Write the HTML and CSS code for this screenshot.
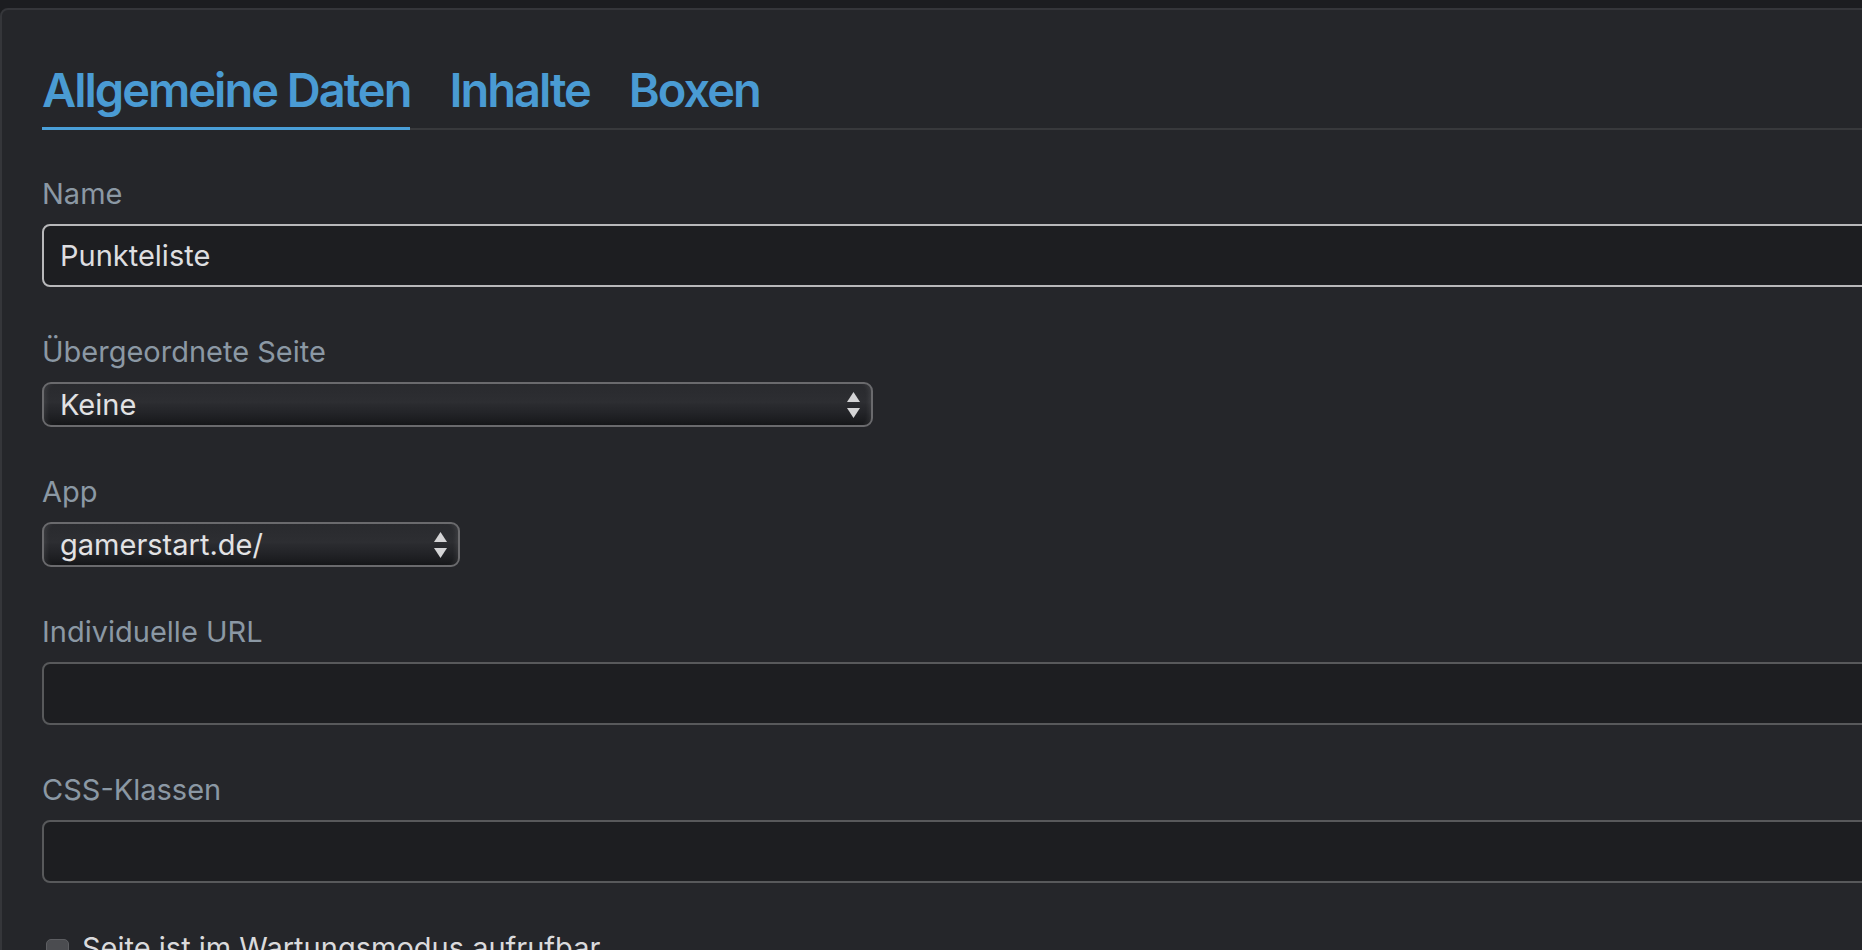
FILE: index.html
```html
<!DOCTYPE html>
<html lang="de">
<head>
<meta charset="utf-8">
<title>Seite bearbeiten</title>
<link rel="stylesheet" href="styles.css">
</head>
<body>
<div class="card">
  <nav class="tabs">
    <a class="tab tab-active">Allgemeine Daten</a>
    <a class="tab">Inhalte</a>
    <a class="tab">Boxen</a>
  </nav>
  <form class="form">
    <div class="group">
      <label class="label">Name</label>
      <input class="input input-focus" type="text" value="Punkteliste">
    </div>
    <div class="group">
      <label class="label">Übergeordnete Seite</label>
      <div class="select select-wide">
        <span>Keine</span>
        <svg class="arrows" width="13" height="26" viewBox="0 0 13 26"><path d="M6.5 0 L13 10 L0 10 Z" fill="#d4d4d6"/><path d="M0 16 L13 16 L6.5 26 Z" fill="#d4d4d6"/></svg>
      </div>
    </div>
    <div class="group">
      <label class="label">App</label>
      <div class="select select-narrow">
        <span>gamerstart.de/</span>
        <svg class="arrows" width="13" height="26" viewBox="0 0 13 26"><path d="M6.5 0 L13 10 L0 10 Z" fill="#d4d4d6"/><path d="M0 16 L13 16 L6.5 26 Z" fill="#d4d4d6"/></svg>
      </div>
    </div>
    <div class="group">
      <label class="label">Individuelle URL</label>
      <input class="input" type="text" value="">
    </div>
    <div class="group">
      <label class="label">CSS-Klassen</label>
      <input class="input" type="text" value="">
    </div>
    <div class="check">
      <span class="box"></span>
      <span>Seite ist im Wartungsmodus aufrufbar</span>
    </div>
  </form>
</div>
</body>
</html>
```
FILE: styles.css
```css
html, body {
  margin: 0;
  height: 100%;
  overflow: hidden;
  background: #1c1d20;
}
body {
  padding-top: 8px;
  box-sizing: border-box;
  font-family: Inter, "Noto Sans", sans-serif;
}
.card {
  width: 2300px;
  min-height: 1100px;
  box-sizing: border-box;
  border: 2px solid #35363a;
  border-radius: 8px;
  background: #25262a;
  padding: 56px 40px 0;
}
.tabs {
  display: flex;
  gap: 39px;
  border-bottom: 2px solid #38393c;
}
.tab {
  font-size: 47px;
  font-weight: 600;
  line-height: 47px;
  letter-spacing: -2px;
  color: #4a9bd3;
  padding-bottom: 14px;
  border-bottom: 3px solid transparent;
  margin-bottom: -2px;
  text-decoration: none;
}
.tab-active {
  border-bottom-color: #4a9fd8;
}
.form {
  margin-top: 46px;
}
.group {
  margin-bottom: 47px;
}
.label {
  display: block;
  font-size: 29px;
  line-height: 35px;
  color: #8b98a4;
  margin-bottom: 13px;
}
.input {
  display: block;
  width: 100%;
  height: 63px;
  box-sizing: border-box;
  border: 2px solid #58595b;
  border-radius: 8px;
  background: #1d1e21;
  color: #dedee0;
  font-family: Inter, "Noto Sans", sans-serif;
  font-size: 29px;
  padding: 0 16px;
  outline: none;
}
.input-focus {
  border-color: #b8b8ba;
}
.select {
  display: flex;
  align-items: center;
  justify-content: space-between;
  height: 45px;
  box-sizing: border-box;
  border: 2px solid #6a6a6d;
  border-radius: 9px;
  padding: 0 11px 0 16px;
  font-size: 29px;
  color: #e2e2e4;
  background: linear-gradient(to bottom, #292a2e 0%, #2d2e32 45%, #2a2b2f 50%, #232428 70%, #1a1b1e 92%, #151618 100%);
  box-shadow: inset 5px 0 5px -3px rgba(255, 255, 255, 0.09), inset -5px 0 5px -3px rgba(255, 255, 255, 0.09);
}
.select-wide {
  width: 831px;
}
.select-narrow {
  width: 418px;
}
.arrows {
  display: block;
}
.check {
  display: flex;
  align-items: flex-start;
  gap: 13px;
  font-size: 29px;
  line-height: 35px;
  color: #dadadc;
}
.box {
  width: 23px;
  height: 23px;
  box-sizing: border-box;
  margin: 9px 0 0 4px;
  border-radius: 5px;
  background: #4b4c50;
  border: 1px solid #5d5e62;
}
```
